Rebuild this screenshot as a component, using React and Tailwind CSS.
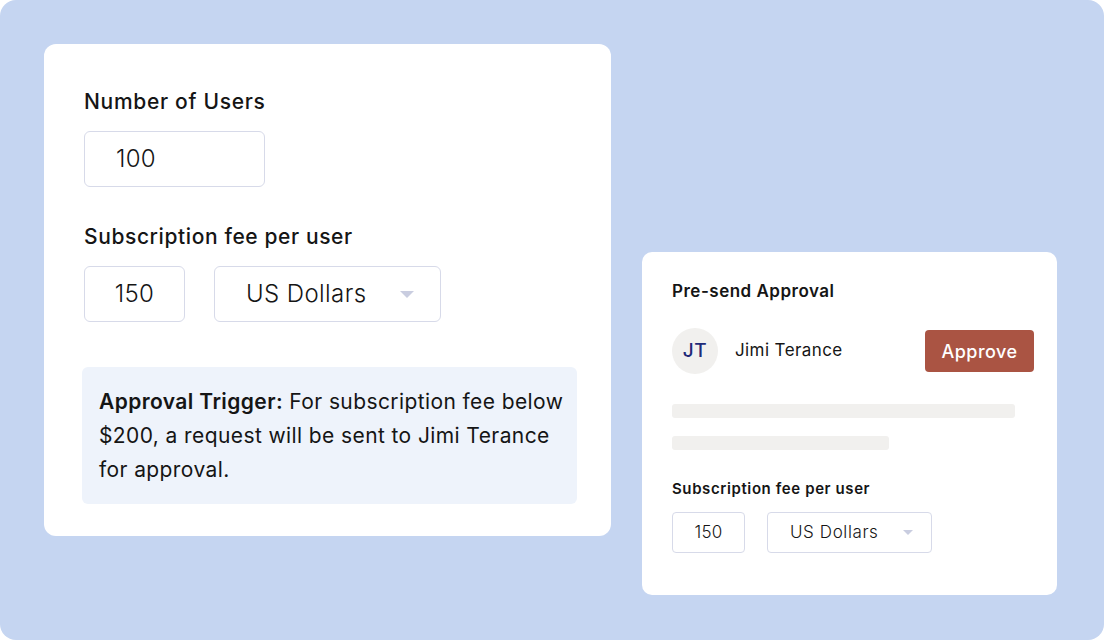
import React from 'react';

const Caret = ({ className }) => (
  <svg viewBox="0 0 14 7" className={className}>
    <path d="M0 0h14L7 7z" fill="#c9cde0" />
  </svg>
);

export default function App() {
  return (
    <div className="w-[1104px] h-[640px] bg-white" style={{ fontFamily: 'Inter, "Noto Sans", sans-serif' }}>
      <div className="w-full h-full bg-[#c5d5f1] rounded-[16px] flex items-start px-[44px] pt-[44px] text-[#151515]">
        {/* left card */}
        <div className="w-[567px] h-[492px] bg-white rounded-[12px] pl-[40px] pr-[30px] pt-[43px]">
          <div className="text-[21px] font-medium leading-[30px] tracking-[0.7px]">Number of Users</div>
          <div className="mt-[14px] w-[181px] h-[56px] border-[1.5px] border-[#d7dae9] rounded-[6px] flex items-center pl-[31px] text-[24px] font-light tracking-[0.3px]">100</div>

          <div className="mt-[35px] text-[21px] font-medium leading-[30px] tracking-[0.6px]">Subscription fee per user</div>
          <div className="mt-[14px] flex gap-[29px]">
            <div className="w-[101px] h-[56px] border-[1.5px] border-[#d7dae9] rounded-[6px] flex items-center justify-center text-[24px] font-light tracking-[0.3px]">150</div>
            <div className="w-[227px] h-[56px] border-[1.5px] border-[#d7dae9] rounded-[6px] flex items-center pl-[31px] pr-[26px] text-[24px] font-light tracking-[0.4px]">
              <span className="flex-1">US Dollars</span>
              <Caret className="w-[14px] h-[7px]" />
            </div>
          </div>

          <div className="mt-[45px] -ml-[2px] w-[495px] h-[137px] bg-[#eef3fb] rounded-[6px] pl-[17px] pr-[4px] pt-[18px] text-[21px] leading-[34px] tracking-[0.4px] whitespace-nowrap">
            <span className="font-semibold">Approval Trigger:</span> For subscription fee below<br />
            $200, a request will be sent to Jimi Terance<br />
            for approval.
          </div>
        </div>

        {/* right card */}
        <div className="ml-[31px] mt-[208px] w-[415px] h-[343px] bg-white rounded-[10px] pl-[30px] pr-[23px] pt-[27px]">
          <div className="text-[17px] font-semibold leading-[24px] tracking-[0.5px]">Pre-send Approval</div>
          <div className="mt-[25px] flex items-center">
            <div className="w-[46px] h-[46px] rounded-full bg-[#f1f0ee] flex items-center justify-center text-[19px] font-medium text-[#1f2a78] tracking-[0.5px]">JT</div>
            <div className="ml-[17px] text-[17px] flex-1 tracking-[0.4px]">Jimi Terance</div>
            <div className="w-[109px] h-[42px] bg-[#aa5443] rounded-[4px] flex items-center justify-center text-white text-[18px] font-medium tracking-[0.5px]">Approve</div>
          </div>
          <div className="mt-[30px] w-[343px] h-[14px] bg-[#f1f0ee] rounded-[3px]" />
          <div className="mt-[18px] w-[217px] h-[14px] bg-[#f1f0ee] rounded-[3px]" />
          <div className="mt-[28px] text-[15px] font-semibold leading-[22px] tracking-[0.6px]">Subscription fee per user</div>
          <div className="mt-[12px] flex gap-[22px]">
            <div className="w-[73px] h-[41px] border-[1.5px] border-[#d7dae9] rounded-[4px] flex items-center justify-center text-[17px] font-light tracking-[0.3px]">150</div>
            <div className="w-[165px] h-[41px] border-[1.5px] border-[#d7dae9] rounded-[4px] flex items-center pl-[22px] pr-[18px] text-[17px] font-light tracking-[0.6px]">
              <span className="flex-1">US Dollars</span>
              <Caret className="w-[10px] h-[5px]" />
            </div>
          </div>
        </div>
      </div>
    </div>
  );
}
